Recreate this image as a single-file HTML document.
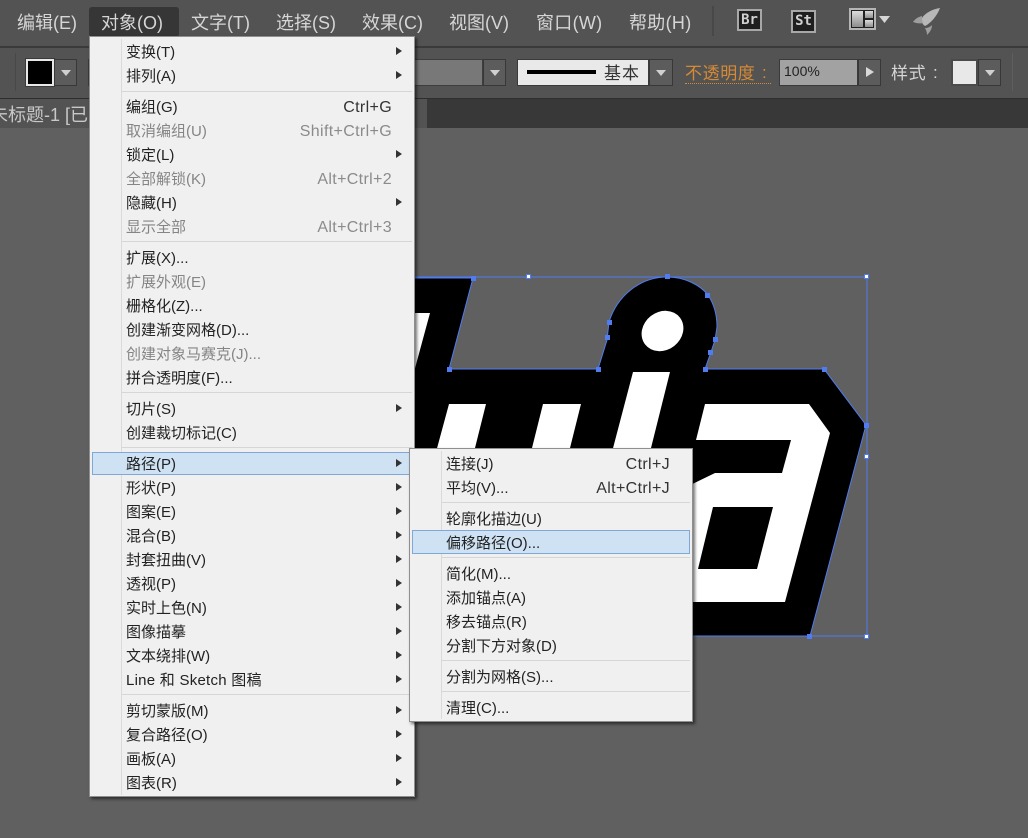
<!DOCTYPE html>
<html lang="zh"><head><meta charset="utf-8"><title>Illustrator</title>
<style>
html,body{margin:0;padding:0}
body{width:1028px;height:838px;overflow:hidden;position:relative;background:#606060;font-family:"Liberation Sans","Noto Sans CJK SC",sans-serif;font-size:15px;color:#222}
div,span{position:absolute;box-sizing:border-box;white-space:nowrap}
.m{top:11px;font-size:18px;line-height:24px;color:#d6d6d6}
.menu{background:#f0f0f0;border:1px solid #8f8f8f;box-shadow:2px 2px 3px rgba(0,0,0,.55)}
.t{height:24px;line-height:24px;color:#222;margin-top:2px}
.d{color:#858585}
.k{height:24px;line-height:24px;color:#333;text-align:right;margin-top:2px;font-size:16px;letter-spacing:.35px}
.kd{color:#8b8b8b}
.s{height:1px;background:#d6d6d6}
.a{width:0;height:0;border-left:6px solid #333;border-top:4px solid transparent;border-bottom:4px solid transparent;margin-top:1px}
.dd{background:#5c5c5c;border:1px solid #383838}
.dd i{position:absolute;left:6px;top:10px;width:0;height:0;border-left:5px solid transparent;border-right:5px solid transparent;border-top:6px solid #d0d0d0}
.hl{background:#cfe2f3;border:1px solid #7fa8d8}
.ic{background:#1f1f1f;border:2px solid #a8a8a8;color:#d0d0d0;font:bold 14px/18px "DejaVu Sans Mono","Liberation Mono",monospace;text-align:center}
</style></head>
<body>
<!-- top bars -->
<div style="left:0;top:0;width:1028px;height:46px;background:#535353"></div>
<div style="left:0;top:46px;width:1028px;height:2px;background:#3a3a3a"></div>
<div style="left:0;top:48px;width:1028px;height:50px;background:#535353"></div>
<div style="left:0;top:98px;width:1028px;height:1px;background:#2e2e2e"></div>
<div style="left:0;top:99px;width:1028px;height:29px;background:#383838"></div>
<div style="left:0;top:99px;width:427px;height:29px;background:#535353"></div>
<div style="left:-10px;top:103px;font-size:18px;line-height:24px;color:#c8c8c8">未标题-1 [已</div>

<div style="left:89px;top:7px;width:90px;height:30px;background:#363636;border-radius:3px"></div>
<span class="m" style="left:17px">编辑(E)</span>
<span class="m" style="left:101px">对象(O)</span>
<span class="m" style="left:191px">文字(T)</span>
<span class="m" style="left:276px">选择(S)</span>
<span class="m" style="left:362px">效果(C)</span>
<span class="m" style="left:449px">视图(V)</span>
<span class="m" style="left:536px;letter-spacing:.3px">窗口(W)</span>
<span class="m" style="left:629px;letter-spacing:.3px">帮助(H)</span>
<div style="left:712px;top:6px;width:2px;height:30px;background:#484848"></div>

<!-- app icons -->
<div class="ic" style="left:737px;top:9px;width:25px;height:22px">Br</div>
<div class="ic" style="left:791px;top:10px;width:25px;height:23px">St</div>
<svg style="position:absolute;left:849px;top:8px" width="42" height="24" viewBox="0 0 42 24"><defs><linearGradient id="g" x1="0" y1="0" x2="0" y2="1"><stop offset="0" stop-color="#dcdcdc"/><stop offset="1" stop-color="#8e8e8e"/></linearGradient></defs><rect x="1" y="1" width="25" height="20" fill="#222" stroke="#b5b5b5" stroke-width="2"/><rect x="3" y="3" width="11" height="16" fill="url(#g)"/><rect x="16" y="3" width="8" height="7" fill="url(#g)"/><rect x="16" y="12" width="8" height="7" fill="url(#g)"/><path d="M30 8h11l-5.500 7z" fill="#d6d6d6"/></svg>
<svg style="position:absolute;left:910px;top:5px" width="34" height="32" viewBox="0 0 34 32"><path d="M30 3C23 4 15 8 12 13c-1 3 0 6 3 8 6-3 12-10 15-18z" fill="#b8b8b8"/><path d="M3 17c2-3 5-5 9-6 0 3 0 5 1 7-4 1-7 0-10-1z" fill="#9e9e9e"/><path d="M15 23c3 0 5-1 7-3 0 4-2 7-5 10 0-3-1-5-2-7z" fill="#9e9e9e"/></svg>

<!-- control bar -->
<div style="left:15px;top:53px;width:1px;height:38px;background:#484848"></div>
<div style="left:26px;top:59px;width:28px;height:27px;background:#000;border:2px solid #e8e8e8;outline:1px solid #3a3a3a"></div>
<div class="dd" style="left:54px;top:59px;width:23px;height:27px"><i></i></div>
<div style="left:88px;top:59px;width:4px;height:27px;background:#3a3a3a"></div>
<div style="left:414px;top:59px;width:69px;height:27px;background:#787878;border:1px solid #3e3e3e"></div>
<div class="dd" style="left:483px;top:59px;width:23px;height:27px"><i></i></div>
<div style="left:517px;top:59px;width:132px;height:27px;background:#e9e9e9;border:1px solid #3a3a3a"></div>
<div style="left:527px;top:70px;width:69px;height:4px;background:#000"></div>
<span style="left:604px;top:62px;font-size:17px;line-height:24px;color:#333;letter-spacing:1px">基本</span>
<div class="dd" style="left:649px;top:59px;width:24px;height:27px"><i></i></div>
<span style="left:685px;top:62px;font-size:17px;line-height:24px;color:#d68a35;letter-spacing:.6px">不透明度</span>
<span style="left:762px;top:61px;font-size:17px;line-height:24px;color:#d68a35">:</span>
<div style="left:685px;top:83px;width:86px;height:0;border-top:1px dotted #d68a35"></div>
<div style="left:779px;top:59px;width:79px;height:27px;background:#a2a2a2;border:1px solid #3a3a3a"></div>
<span style="left:784px;top:59px;line-height:24px;font-size:14px;color:#222">100%</span>
<div style="left:858px;top:59px;width:23px;height:27px;background:#5c5c5c;border:1px solid #383838"></div>
<div style="left:866px;top:67px;width:0;height:0;border-left:8px solid #d8d8d8;border-top:5px solid transparent;border-bottom:5px solid transparent"></div>
<span style="left:891px;top:62px;font-size:17px;line-height:24px;color:#d6d6d6;letter-spacing:.6px">样式</span>
<span style="left:933px;top:61px;font-size:17px;line-height:24px;color:#d6d6d6">:</span>
<div style="left:951px;top:59px;width:27px;height:27px;background:#e8e8e8;border:2px solid #4a4a4a"></div>
<div class="dd" style="left:978px;top:59px;width:23px;height:27px"><i></i></div>
<div style="left:1012px;top:53px;width:1px;height:38px;background:#5e5e5e"></div>

<!-- artwork -->
<svg style="position:absolute;left:0;top:0" width="1028" height="838" viewBox="0 0 1028 838">
<path d="M380 278H473L449 369H598L607 340L609 322C617 296 640 277 667 277C685 277 700 285 708 295C714 304 717 315 717 327L715 340L711 352L705 369H824L866 425L810 636H380Z" fill="#000" stroke="#4f7cf0" stroke-width="1"/>
<path d="M380 277H867V636H810" fill="none" stroke="#4f7cf0" stroke-width="1"/>
<path d="M430 313L414 372V313Z" fill="#fff"/>
<path d="M449 404H486L474 452H436Z M543 404H581L569 452H531Z M633 372H670L650 452H612Z" fill="#fff"/>
<ellipse cx="662.500" cy="331" rx="22" ry="19" transform="rotate(-38 662.500 331)" fill="#fff"/>
<path d="M705 404H809L830 433L785 602H680V490L715 473H782L791 440H696Z" fill="#fff"/>
<path d="M713 507H773L757 569H698Z" fill="#000"/>
<g fill="#4f7cf0">
<rect x="471" y="276" width="5" height="5"/><rect x="665" y="274" width="5" height="5"/><rect x="705" y="293" width="5" height="5"/><rect x="607" y="320" width="5" height="5"/><rect x="605" y="335" width="5" height="5"/><rect x="713" y="337" width="5" height="5"/><rect x="708" y="350" width="5" height="5"/><rect x="447" y="367" width="5" height="5"/><rect x="596" y="367" width="5" height="5"/><rect x="703" y="367" width="5" height="5"/><rect x="822" y="367" width="5" height="5"/><rect x="864" y="423" width="5" height="5"/><rect x="807" y="634" width="5" height="5"/>
</g>
<g fill="#fff" stroke="#4f7cf0">
<rect x="526.500" y="274.500" width="4" height="4"/><rect x="864.500" y="274.500" width="4" height="4"/><rect x="864.500" y="454.500" width="4" height="4"/><rect x="864.500" y="634.500" width="4" height="4"/>
</g>
</svg>

<!-- main menu -->
<div class="menu" style="left:89px;top:36px;width:326px;height:761px"></div>
<div style="left:121px;top:39px;width:1px;height:756px;background:#dadada"></div>
<div class="hl" style="left:92px;top:452px;width:321px;height:23px"></div>

<span class="t" style="left:126px;top:39px">变换(T)</span><div class="a" style="left:396px;top:46px"></div>
<span class="t" style="left:126px;top:63px">排列(A)</span><div class="a" style="left:396px;top:70px"></div>
<div class="s" style="left:122px;top:91px;width:290px"></div>
<span class="t" style="left:126px;top:94px">编组(G)</span><span class="k" style="right:636px;top:94px">Ctrl+G</span>
<span class="t d" style="left:126px;top:118px">取消编组(U)</span><span class="k kd" style="right:636px;top:118px">Shift+Ctrl+G</span>
<span class="t" style="left:126px;top:142px">锁定(L)</span><div class="a" style="left:396px;top:149px"></div>
<span class="t d" style="left:126px;top:166px">全部解锁(K)</span><span class="k kd" style="right:636px;top:166px">Alt+Ctrl+2</span>
<span class="t" style="left:126px;top:190px">隐藏(H)</span><div class="a" style="left:396px;top:197px"></div>
<span class="t d" style="left:126px;top:214px">显示全部</span><span class="k kd" style="right:636px;top:214px">Alt+Ctrl+3</span>
<div class="s" style="left:122px;top:241px;width:290px"></div>
<span class="t" style="left:126px;top:245px">扩展(X)...</span>
<span class="t d" style="left:126px;top:269px">扩展外观(E)</span>
<span class="t" style="left:126px;top:293px">栅格化(Z)...</span>
<span class="t" style="left:126px;top:317px">创建渐变网格(D)...</span>
<span class="t d" style="left:126px;top:341px">创建对象马赛克(J)...</span>
<span class="t" style="left:126px;top:365px">拼合透明度(F)...</span>
<div class="s" style="left:122px;top:392px;width:290px"></div>
<span class="t" style="left:126px;top:396px">切片(S)</span><div class="a" style="left:396px;top:403px"></div>
<span class="t" style="left:126px;top:420px">创建裁切标记(C)</span>
<div class="s" style="left:122px;top:447px;width:290px"></div>
<span class="t" style="left:126px;top:451px">路径(P)</span><div class="a" style="left:396px;top:458px"></div>
<span class="t" style="left:126px;top:475px">形状(P)</span><div class="a" style="left:396px;top:482px"></div>
<span class="t" style="left:126px;top:499px">图案(E)</span><div class="a" style="left:396px;top:506px"></div>
<span class="t" style="left:126px;top:523px">混合(B)</span><div class="a" style="left:396px;top:530px"></div>
<span class="t" style="left:126px;top:547px">封套扭曲(V)</span><div class="a" style="left:396px;top:554px"></div>
<span class="t" style="left:126px;top:571px">透视(P)</span><div class="a" style="left:396px;top:578px"></div>
<span class="t" style="left:126px;top:595px">实时上色(N)</span><div class="a" style="left:396px;top:602px"></div>
<span class="t" style="left:126px;top:619px">图像描摹</span><div class="a" style="left:396px;top:626px"></div>
<span class="t" style="left:126px;top:643px">文本绕排(W)</span><div class="a" style="left:396px;top:650px"></div>
<span class="t" style="left:126px;top:667px;letter-spacing:.25px">Line 和 Sketch 图稿</span><div class="a" style="left:396px;top:674px"></div>
<div class="s" style="left:122px;top:694px;width:290px"></div>
<span class="t" style="left:126px;top:698px">剪切蒙版(M)</span><div class="a" style="left:396px;top:705px"></div>
<span class="t" style="left:126px;top:722px">复合路径(O)</span><div class="a" style="left:396px;top:729px"></div>
<span class="t" style="left:126px;top:746px">画板(A)</span><div class="a" style="left:396px;top:753px"></div>
<span class="t" style="left:126px;top:770px">图表(R)</span><div class="a" style="left:396px;top:777px"></div>

<!-- submenu -->
<div class="menu" style="left:409px;top:448px;width:284px;height:274px"></div>
<div style="left:441px;top:451px;width:1px;height:268px;background:#dadada"></div>
<div class="hl" style="left:412px;top:530px;width:278px;height:24px"></div>
<span class="t" style="left:446px;top:451px">连接(J)</span><span class="k" style="right:358px;top:451px">Ctrl+J</span>
<span class="t" style="left:446px;top:475px">平均(V)...</span><span class="k" style="right:358px;top:475px">Alt+Ctrl+J</span>
<div class="s" style="left:442px;top:502px;width:248px"></div>
<span class="t" style="left:446px;top:506px">轮廓化描边(U)</span>
<span class="t" style="left:446px;top:530px">偏移路径(O)...</span>
<div class="s" style="left:442px;top:557px;width:248px"></div>
<span class="t" style="left:446px;top:561px">简化(M)...</span>
<span class="t" style="left:446px;top:585px">添加锚点(A)</span>
<span class="t" style="left:446px;top:609px">移去锚点(R)</span>
<span class="t" style="left:446px;top:633px">分割下方对象(D)</span>
<div class="s" style="left:442px;top:660px;width:248px"></div>
<span class="t" style="left:446px;top:664px">分割为网格(S)...</span>
<div class="s" style="left:442px;top:691px;width:248px"></div>
<span class="t" style="left:446px;top:695px">清理(C)...</span>
</body></html>
